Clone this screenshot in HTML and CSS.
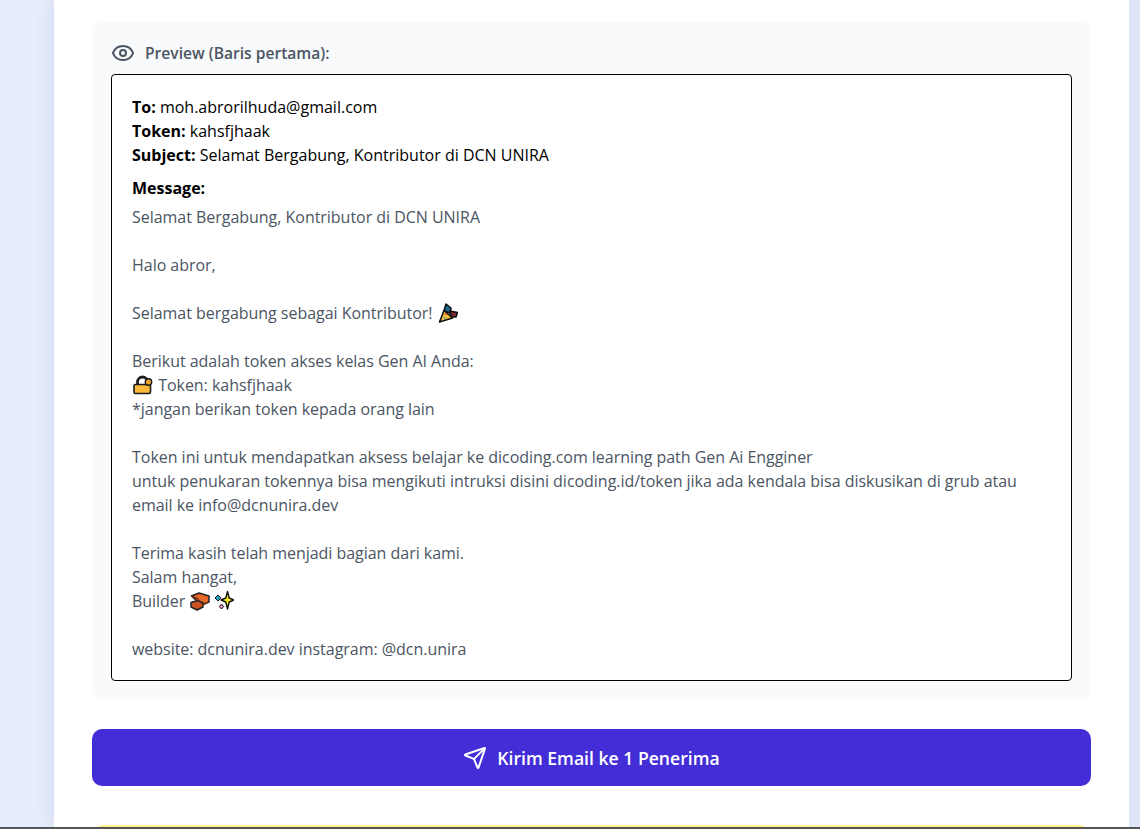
FILE: index.html
```html
<!DOCTYPE html>
<html lang="id">
<head>
<meta charset="utf-8">
<title>Preview</title>
<link rel="stylesheet" href="styles.css">
</head>
<body>
<div class="viewport">
  <main class="card">
    <section class="preview">
      <h3 class="preview-title">
        <svg class="eye" viewBox="0 0 24 24" fill="none" stroke="currentColor" stroke-width="2" stroke-linecap="round" stroke-linejoin="round"><path d="M2.06 12.35a1 1 0 0 1 0-.7 10.75 10.75 0 0 1 19.88 0 1 1 0 0 1 0 .7 10.75 10.75 0 0 1-19.88 0"/><circle cx="12" cy="12" r="3"/></svg>
        <span>Preview (Baris pertama):</span>
      </h3>
      <div class="mail">
        <div class="meta"><strong>To:</strong> moh.abrorilhuda@gmail.com</div>
        <div class="meta"><strong>Token:</strong> kahsfjhaak</div>
        <div class="meta"><strong>Subject:</strong> Selamat Bergabung, Kontributor di DCN UNIRA</div>
        <div class="message-label"><strong>Message:</strong></div>
        <div class="message">
          <p>Selamat Bergabung, Kontributor di DCN UNIRA</p>
          <p class="blank"></p>
          <p>Halo abror,</p>
          <p class="blank"></p>
          <p>Selamat bergabung sebagai Kontributor! <svg class="emoji" viewBox="0 0 20 20"><path d="M8 1 13 5 12 10 6 8z" fill="#1c6a94" stroke="#111" stroke-width="1.600" stroke-linejoin="round"/><path d="M12 8 19.500 9.500 18 14 13 14z" fill="#7d2b33" stroke="#111" stroke-width="1.600" stroke-linejoin="round"/><path d="M1.500 19 6 7.500 14.500 15z" fill="#f8bf3a" stroke="#111" stroke-width="1.600" stroke-linejoin="round"/><circle cx="8" cy="11" r="1" fill="#d9473f"/><circle cx="6.500" cy="15" r="1" fill="#3fa0c9"/></svg></p>
          <p class="blank"></p>
          <p>Berikut adalah token akses kelas Gen AI Anda:</p>
          <p><svg class="emoji" viewBox="0 0 20 20"><path d="M4.500 10V7a5 5 0 0 1 10 0v3" fill="none" stroke="#222" stroke-width="2.800"/><rect x="1" y="9.500" width="16.500" height="9" rx="1.500" fill="#fbb93a" stroke="#1a1a1a" stroke-width="1.600"/><circle cx="15.500" cy="7" r="3.200" fill="#e9a52c" stroke="#1a1a1a" stroke-width="1.400"/></svg> Token: kahsfjhaak</p>
          <p>*jangan berikan token kepada orang lain</p>
          <p class="blank"></p>
          <p>Token ini untuk mendapatkan aksess belajar ke dicoding.com learning path Gen Ai Engginer</p>
          <p>untuk penukaran tokennya bisa mengikuti intruksi disini dicoding.id/token jika ada kendala bisa diskusikan di grub atau email ke info@dcnunira.dev</p>
          <p class="blank"></p>
          <p>Terima kasih telah menjadi bagian dari kami.</p>
          <p>Salam hangat,</p>
          <p>Builder <svg class="emoji" viewBox="0 0 20 20"><path d="M1.500 5 9 2l10 3v6l-6 2.500L8 11z" fill="#e8682c" stroke="#222" stroke-width="1.500" stroke-linejoin="round"/><path d="M1 11.500 8 9.500l5 2.500v4l-6 3-6-3z" fill="#c9501f" stroke="#222" stroke-width="1.500" stroke-linejoin="round"/><path d="M13 13.500l6-2.500M1.500 5 8 8v2" fill="none" stroke="#6e2a0e" stroke-width="1.200"/></svg><svg class="emoji emoji-next" viewBox="0 0 20 20"><path d="M13.500 .5 15.200 7 20 9l-4.800 2-1.700 7-1.700-7L7 9l4.800-2z" fill="#ffec1a" stroke="#111" stroke-width="1.400" stroke-linejoin="round"/><path d="M4 4l2.800 3L4 10 1 7z" fill="#25a5c8" stroke="#111" stroke-width="1"/><path d="M7.500 13l2.200 2.500-2.200 2.500-2.200-2.500z" fill="#e88ac0" stroke="#111" stroke-width="1"/></svg></p>
          <p class="blank"></p>
          <p>website: dcnunira.dev instagram: @dcn.unira</p>
        </div>
      </div>
    </section>
    <button class="send" type="button">
      <svg class="send-icon" viewBox="0 0 24 24" fill="none" stroke="currentColor" stroke-width="2" stroke-linecap="round" stroke-linejoin="round"><path d="M14.536 21.686a.5.5 0 0 0 .937-.024l6.500-19a.496.496 0 0 0-.635-.635l-19 6.500a.5.5 0 0 0-.024.937l7.930 3.180a2 2 0 0 1 1.112 1.110z"/><path d="m21.854 2.147-10.940 10.939"/></svg>
      <span>Kirim Email ke 1 Penerima</span>
    </button>
    <div class="next-panel"></div>
  </main>
</div>
<div class="bottom-edge"></div>
</body>
</html>
```
FILE: styles.css
```css
* { box-sizing: border-box; }
html, body { margin: 0; height: 100%; overflow: hidden; }
body {
  background: #e8edfd;
  font-family: "Open Sans", "Noto Sans", sans-serif;
  display: flex;
  flex-direction: column;
}
.viewport {
  flex: 1;
  min-height: 0;
  overflow: hidden;
  padding-left: 54px;
  padding-right: 11px;
  background: linear-gradient(90deg, #e8edfd 0, #e8edfd 1129px, #e0e5f8 1129px);
}
.card {
  height: 100%;
  background: #fff;
  padding: 22px 38px 0;
  box-shadow: 0 0 18px rgba(60, 80, 140, .16);
  clip-path: inset(0 0 0 -20px);
}
.preview {
  background: #f9fafb;
  border-radius: 10px;
  padding: 20px 19px 19px;
}
.preview-title {
  margin: 0 0 10px;
  display: flex;
  align-items: center;
  gap: 10px;
  height: 22px;
  font-size: 15.6px;
  font-weight: 600;
  color: #4b5563;
}
.eye { width: 24px; height: 24px; color: #4b5563; }
.mail {
  background: #fff;
  border: 1px solid #000;
  border-radius: 4px;
  padding: 20px 20px 19px;
  font-size: 16px;
  line-height: 24px;
  color: #000;
}
.meta strong, .message-label strong { font-weight: 700; }
.message-label { margin-top: 9px; margin-bottom: 5px; }
.message { color: #4b5563; letter-spacing: -.03px; }
.message p { margin: 0; }
.message .blank { height: 24px; }
.emoji { width: 20px; height: 20px; margin: 0 1px; vertical-align: -4px; }
.emoji-next { margin-left: 3px; }
.send {
  margin-top: 29px;
  width: 100%;
  height: 57px;
  border: 0;
  border-radius: 10px;
  background: #432dd7;
  color: #fff;
  display: flex;
  align-items: center;
  justify-content: center;
  gap: 10px;
  font: 600 17.6px "Open Sans", "Noto Sans", sans-serif;
}
.send-icon { width: 24px; height: 24px; }
.next-panel {
  margin-top: 39px;
  height: 20px;
  background: #fefce8;
  border-top: 2px solid #fef08a;
  border-radius: 12px 12px 0 0;
}
.bottom-edge { height: 2px; background: #555; flex: none; }
```
